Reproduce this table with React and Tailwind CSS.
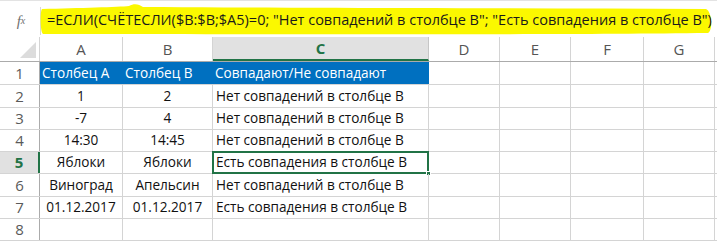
import React from "react";

const cols = [
  { key: "A", w: 83 },
  { key: "B", w: 90 },
  { key: "C", w: 216 },
  { key: "D", w: 71 },
  { key: "E", w: 71 },
  { key: "F", w: 73 },
  { key: "G", w: 71 },
  { key: "", w: 60 },
];

const rowHeights = [23, 23, 22, 22, 22, 23, 22, 22];

const data = [
  ["Столбец A", "Столбец B", "Совпадают/Не совпадают"],
  ["1", "2", "Нет совпадений в столбце B"],
  ["-7", "4", "Нет совпадений в столбце B"],
  ["14:30", "14:45", "Нет совпадений в столбце B"],
  ["Яблоки", "Яблоки", "Есть совпадения в столбце B"],
  ["Виноград", "Апельсин", "Нет совпадений в столбце B"],
  ["01.12.2017", "01.12.2017", "Есть совпадения в столбце B"],
  ["", "", ""],
];

const formula =
  '=ЕСЛИ(СЧЁТЕСЛИ($B:$B;$A5)=0; "Нет совпадений в столбце B"; "Есть совпадения в столбце B")';

function FormulaBar() {
  return (
    <div className="flex h-[42px] items-center border-t border-[#e3e3e3] bg-white pt-[6px]">
      <div className="flex w-[40px] shrink-0 justify-center pl-[2px] font-['Liberation_Serif'] text-[15px] italic text-[#707070]">
        f<span className="text-[10px] leading-[22px]">x</span>
      </div>
      <div className="relative h-[28px] flex-1 border-l border-[#d8d8d8]">
        {/* marker highlight behind the formula text */}
        <svg className="absolute -left-[2px] -top-[5px]" width="675" height="36" viewBox="0 0 675 36">
          <path
            d="M3 7 C40 6 80 5 90 4 C95 1 100 2 104 5 C250 6 450 6 667 7 C673 9 674 29 669 31 C500 33 200 32 4 32 C1 30 1 9 3 7 Z"
            fill="#fbf800"
          />
        </svg>
        <div className="relative whitespace-nowrap pl-[6px] font-['Open_Sans'] text-[14.5px] leading-[26px] text-[#1a1a1a]">
          {formula}
        </div>
      </div>
    </div>
  );
}

function HeaderRow() {
  return (
    <div className="flex h-[25px] border-b border-[#ababab]">
      <div className="flex w-[40px] shrink-0 items-end justify-end border-r border-[#d4d4d4] p-[3px]">
        <svg width="16" height="16" viewBox="0 0 16 16">
          <path d="M16 0 L16 16 L0 16 Z" fill="#dcdcdc" />
        </svg>
      </div>
      {cols.map((c, i) => {
        const active = c.key === "C";
        return (
          <div
            key={i}
            style={{ width: c.w }}
            className={
              active
                ? "shrink-0 flex items-center justify-center border-r border-[#c6c6c6] border-b-2 border-b-[#217346] bg-[#e1e1e1] font-['Open_Sans'] text-[15px] font-bold text-[#217346]"
                : "shrink-0 flex items-center justify-center border-r border-[#d4d4d4] font-['Open_Sans'] text-[15px] text-[#555]"
            }
          >
            {c.key}
          </div>
        );
      })}
    </div>
  );
}

function DataRow({ idx, values, h }) {
  const n = idx + 1;
  const activeRow = n === 5;
  const header = n === 1;
  return (
    <div className="flex border-b border-[#d4d4d4]" style={{ height: h }}>
      <div
        className={
          activeRow
            ? "w-[40px] shrink-0 flex items-center justify-center bg-[#e1e1e1] border-r-2 border-r-[#217346] font-['Open_Sans'] text-[15px] font-bold text-[#217346]"
            : "w-[40px] shrink-0 flex items-center justify-center border-r border-[#ababab] font-['Open_Sans'] text-[15px] text-[#5a5a5a]"
        }
      >
        {n}
      </div>
      {cols.map((c, ci) => {
        const v = values[ci] ?? "";
        const isC = ci === 2;
        const selected = activeRow && isC;
        let cls =
          "relative shrink-0 flex items-center whitespace-nowrap font-['Open_Sans'] text-[13.6px] border-r border-[#d4d4d4] ";
        if (header && ci < 3) {
          cls += "bg-[#0070c0] text-white border-r-[#0070c0] px-[2px] justify-start";
        } else if (isC) {
          cls += "text-[#111] px-[3px] justify-start";
        } else {
          cls += "text-[#111] justify-center";
        }
        return (
          <div key={ci} style={{ width: c.w }} className={cls}>
            {v}
            {selected && (
              <>
                <div className="pointer-events-none absolute -inset-[1px] border-2 border-[#217346]" />
                <div className="absolute -right-[3px] -bottom-[3px] h-[5px] w-[5px] border border-white bg-[#217346]" />
              </>
            )}
          </div>
        );
      })}
    </div>
  );
}

export default function App() {
  return (
    <div className="flex h-[241px] w-[717px] flex-col overflow-hidden bg-white">
      <FormulaBar />
      <div className="h-[2px] shrink-0" />
      <HeaderRow />
      {data.map((row, i) => (
        <DataRow key={i} idx={i} values={row} h={rowHeights[i]} />
      ))}
    </div>
  );
}
